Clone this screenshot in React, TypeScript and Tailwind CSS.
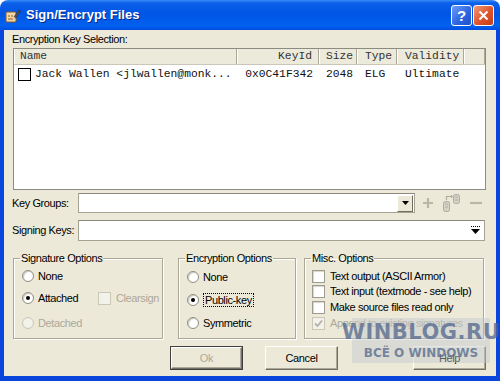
import React from 'react';

function Radio({ checked, disabled }: { checked?: boolean; disabled?: boolean }) {
  return (
    <span
      className={`flex shrink-0 items-center justify-center w-[12px] h-[12px] rounded-full border ${
        disabled ? 'border-[#cac7b6] bg-[#f2f1ea]' : 'border-[#8f8d82] bg-white shadow-[inset_1px_1px_1px_#c9c7bc]'
      }`}
    >
      {checked && <span className="w-[4px] h-[4px] rounded-full bg-black" />}
    </span>
  );
}

function Check({ checked, disabled, dark }: { checked?: boolean; disabled?: boolean; dark?: boolean }) {
  return (
    <span
      className={`flex shrink-0 items-center justify-center w-[13px] h-[13px] border ${
        dark
          ? 'border-black bg-white'
          : disabled
          ? 'border-[#cac7b6] bg-[#f2f1ea]'
          : 'border-[#9e9c90] bg-white shadow-[inset_1px_1px_1px_#d6d4ca]'
      }`}
    >
      {checked && (
        <svg width="9" height="9" viewBox="0 0 9 9">
          <path d="M1 4.5 L3.5 7 L8 1.5" fill="none" stroke={disabled ? '#b4b2a5' : '#000'} strokeWidth="1.8" />
        </svg>
      )}
    </span>
  );
}

function Button({ label, def, disabled }: { label: string; def?: boolean; disabled?: boolean }) {
  return (
    <div
      className={`flex w-[73px] h-[24px] items-center justify-center ${
        def ? 'border border-[#404040]' : ''
      }`}
    >
      <div
        className={`flex w-full h-full items-center justify-center bg-[#ece9d8] border border-t-white border-l-white border-r-[#716f64] border-b-[#716f64] shadow-[inset_-1px_-1px_0_#aca899] ${
          disabled ? 'text-[#aca899]' : 'text-black'
        }`}
      >
        {label}
      </div>
    </div>
  );
}

function TitleIcon() {
  return (
    <svg width="16" height="15" viewBox="0 0 16 15">
      <rect x="1" y="4" width="10" height="10" rx="1" fill="#f2d7a8" stroke="#8a5a2b" strokeWidth="1" />
      <path d="M3 8 h2 M6 8 h2 M3 11 h5" stroke="#8a5a2b" strokeWidth="1" />
      <path d="M9 9 L14 2 L15.5 3.2 L10.5 10 Z" fill="#5a5a5a" stroke="#222" strokeWidth="0.6" />
      <path d="M9 9 L8.6 10.8 L10.5 10 Z" fill="#d8c49a" />
    </svg>
  );
}

const cols = [
  { label: 'Name', cls: 'w-[223px] pl-[6px]' },
  { label: 'KeyId', cls: 'w-[82px] justify-end pr-[6px]' },
  { label: 'Size', cls: 'w-[38px] pl-[7px]' },
  { label: 'Type', cls: 'w-[40px] pl-[8px]' },
  { label: 'Validity', cls: 'w-[67px] pl-[8px]' },
];

export default function App() {
  return (
    <div className="relative w-[500px] h-[381px] bg-white flex flex-col whitespace-nowrap font-['Liberation_Sans',Arial,sans-serif] text-[11px] tracking-[-0.4px] text-black">
      {/* Title bar */}
      <div className="h-[30px] shrink-0 rounded-t-[8px] bg-[linear-gradient(180deg,#3a8cf7_0%,#0b5fe9_10%,#0055e5_45%,#0261f0_85%,#004de0_100%)] flex items-center pl-[5px] pr-[6px] tracking-normal">
        <TitleIcon />
        <span className="ml-[5px] text-white font-bold text-[13px] [text-shadow:1px_1px_0_#0a2a8a]">
          Sign/Encrypt Files
        </span>
        <div className="ml-auto flex gap-[1px]">
          <div className="flex w-[21px] h-[21px] items-center justify-center rounded-[3px] border border-white bg-[linear-gradient(135deg,#6d9cf7,#2a62e0_60%,#1f51cc)] text-white font-bold text-[15px] leading-none">
            ?
          </div>
          <div className="flex w-[21px] h-[21px] items-center justify-center rounded-[3px] border border-white bg-[linear-gradient(135deg,#f09a7a,#e0522a_55%,#c43d16)]">
            <svg width="11" height="11" viewBox="0 0 11 11">
              <path d="M1.5 1.5 L9.5 9.5 M9.5 1.5 L1.5 9.5" stroke="#fff" strokeWidth="2" />
            </svg>
          </div>
        </div>
      </div>

      {/* Body */}
      <div className="flex-1 flex flex-col bg-[#ece9d8] border-x-4 border-b-[5px] border-[#0a45dd]">
        <div className="mt-[2px] h-[14px] leading-[14px] pl-[8px]">Encryption Key Selection:</div>

        {/* Key list */}
        <div className="mt-[2px] ml-[9px] w-[473px] h-[142px] border border-[#8c8b82] bg-white flex flex-col font-['Liberation_Mono',monospace] text-[11.3px] tracking-normal">
          <div className="flex h-[16px] bg-[#ebeadb] border-b border-[#cbc7b8] text-[#333]">
            {cols.map((c) => (
              <div
                key={c.label}
                className={`flex items-center border-r border-[#aca899] shadow-[inset_1px_0_0_#fff] ${c.cls}`}
              >
                {c.label}
              </div>
            ))}
            <div className="flex-1 shadow-[inset_1px_0_0_#fff] border-r border-[#aca899]" />
          </div>
          <div className="mt-[2px] flex h-[15px] items-center text-[#111]">
            <div className="flex w-[223px] items-center pl-[4px] gap-[4px]">
              <Check dark />
              <span>Jack Wallen &lt;jlwallen@monk...</span>
            </div>
            <div className="flex w-[82px] justify-end pr-[6px]">0x0C41F342</div>
            <div className="w-[38px] pl-[7px]">2048</div>
            <div className="w-[40px] pl-[8px]">ELG</div>
            <div className="w-[67px] pl-[8px]">Ultimate</div>
          </div>
        </div>

        {/* Key groups */}
        <div className="mt-[3px] flex h-[20px] items-center pl-[8px]">
          <span className="w-[66px]">Key Groups:</span>
          <div className="flex w-[337px] h-[20px] items-center justify-end bg-white border border-[#a5a293] border-t-[#8c8a7e] pr-[1px]">
            <div className="flex w-[16px] h-[17px] items-center justify-center bg-[#ece9d8] border border-t-white border-l-white border-r-[#716f64] border-b-[#716f64]">
              <svg width="7" height="4" viewBox="0 0 7 4">
                <path d="M0 0 H7 L3.5 4 Z" fill="#000" />
              </svg>
            </div>
          </div>
          <svg className="ml-[7px]" width="12" height="12" viewBox="0 0 12 12">
            <path d="M6 1 V11 M1 6 H11" stroke="#b9b6a9" strokeWidth="2.2" />
          </svg>
          <svg className="ml-[8px]" width="19" height="20" viewBox="0 0 19 20">
            <g fill="#d5d3c8" stroke="#aeab9e" strokeWidth="1">
              <rect x="1.5" y="8.5" width="6" height="10" rx="2" />
              <rect x="11.5" y="1.5" width="6" height="9" rx="2" />
            </g>
            <path d="M3 11 h3 M3 14 h3 M13 4 h3 M13 7 h3" stroke="#aeab9e" strokeWidth="1" />
            <path d="M4.5 7 V3.5 H10" fill="none" stroke="#aeab9e" strokeWidth="1.2" />
            <path d="M9 1.5 L11 3.5 L9 5.5 Z" fill="#aeab9e" />
          </svg>
          <svg className="ml-[8px]" width="14" height="12" viewBox="0 0 14 12">
            <path d="M1 6 H13" stroke="#b9b6a9" strokeWidth="2.2" />
          </svg>
        </div>

        {/* Signing keys */}
        <div className="mt-[7px] flex h-[21px] items-center pl-[8px]">
          <span className="w-[66px]">Signing Keys:</span>
          <div className="flex w-[407px] h-[21px] items-center justify-end bg-white border border-[#a5a293] border-t-[#8c8a7e] pr-[3px]">
            <svg width="11" height="11" viewBox="0 0 11 11">
              <path d="M1 1.5 H10" stroke="#000" strokeWidth="1" strokeDasharray="1 1" />
              <path d="M1 4 H10 L5.5 9 Z" fill="#000" />
            </svg>
          </div>
        </div>

        {/* Option groups */}
        <div className="mt-[11px] flex pl-[9px]">
          <fieldset className="w-[150px] h-[87px] border border-[#aca899] shadow-[1px_1px_0_#fff,inset_1px_1px_0_#fff]">
            <legend className="ml-[6px] px-[1px] h-[12px] leading-[12px]">Signature Options</legend>
            <div className="flex flex-col pl-[8px]">
              <div className="mt-[5px] flex h-[14px] items-center gap-[4px]">
                <Radio />
                <span>None</span>
              </div>
              <div className="mt-[8px] flex h-[14px] items-center">
                <Radio checked />
                <span className="ml-[4px] w-[60px]">Attached</span>
                <Check disabled />
                <span className="ml-[5px] text-[#aca899]">Clearsign</span>
              </div>
              <div className="mt-[11px] flex h-[14px] items-center gap-[4px]">
                <Radio disabled />
                <span className="text-[#aca899]">Detached</span>
              </div>
            </div>
          </fieldset>

          <fieldset className="ml-[15px] w-[118px] h-[87px] border border-[#aca899] shadow-[1px_1px_0_#fff,inset_1px_1px_0_#fff]">
            <legend className="ml-[6px] px-[1px] h-[12px] leading-[12px]">Encryption Options</legend>
            <div className="flex flex-col pl-[8px]">
              <div className="mt-[6px] flex h-[14px] items-center gap-[4px]">
                <Radio />
                <span>None</span>
              </div>
              <div className="mt-[9px] flex h-[14px] items-center gap-[4px]">
                <Radio checked />
                <span className="border border-dotted border-black px-[1px] leading-[12px]">Public-key</span>
              </div>
              <div className="mt-[9px] flex h-[14px] items-center gap-[4px]">
                <Radio />
                <span>Symmetric</span>
              </div>
            </div>
          </fieldset>

          <fieldset className="ml-[8px] w-[180px] h-[87px] border border-[#aca899] shadow-[1px_1px_0_#fff,inset_1px_1px_0_#fff]">
            <legend className="ml-[6px] px-[1px] h-[12px] leading-[12px]">Misc. Options</legend>
            <div className="flex flex-col pl-[7px]">
              <div className="mt-[5px] flex h-[14px] items-center gap-[5px]">
                <Check />
                <span>Text output (ASCII Armor)</span>
              </div>
              <div className="mt-[1px] flex h-[14px] items-center gap-[5px]">
                <Check />
                <span>Text input (textmode - see help)</span>
              </div>
              <div className="mt-[2px] flex h-[14px] items-center gap-[5px]">
                <Check />
                <span>Make source files read only</span>
              </div>
              <div className="mt-[2px] flex h-[14px] items-center gap-[5px]">
                <Check checked disabled />
                <span className="text-[#aca899]">Append to existing signatures</span>
              </div>
            </div>
          </fieldset>
        </div>

        {/* Buttons */}
        <div className="mt-[7px] flex pl-[166px]">
          <Button label="Ok" def disabled />
          <div className="ml-[22px]">
            <Button label="Cancel" />
          </div>
          <div className="ml-[75px]">
            <Button label="Help" />
          </div>
        </div>
      </div>

      {/* Watermark overlay */}
      <div className="absolute left-[352px] top-[318px] w-[138px] h-[45px] bg-[#c4c7cf]/45 flex flex-col items-center justify-center font-['DejaVu_Sans',sans-serif] font-bold text-[#51668c]/75 leading-none tracking-normal">
        <span className="text-[21px] tracking-[0.5px]">WINBLOG.RU</span>
        <span className="mt-[4px] text-[12px]">ВСЁ О WINDOWS</span>
      </div>
    </div>
  );
}
